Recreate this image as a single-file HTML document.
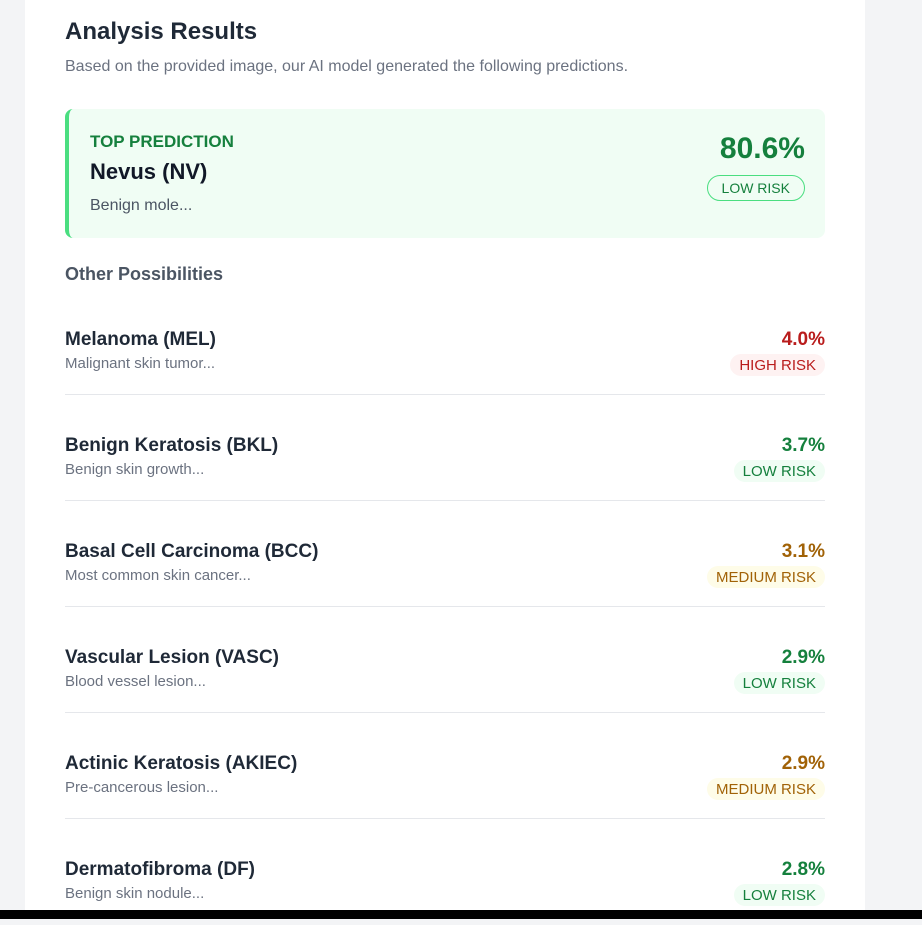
<html><head><style>
body{margin:0;width:922px;height:919px;background:#f3f4f6;font-family:"Liberation Sans",sans-serif;overflow:hidden;position:relative}
.card{position:absolute;left:25px;top:0;width:840px;height:919px;background:#fff}
.abs{position:absolute}
h1{position:absolute;left:65px;top:18px;margin:0;font-size:24px;font-weight:bold;color:#1f2937}
.sub{left:65px;top:58px;font-size:16px;color:#6b7280}
.top{left:65px;top:109px;width:760px;height:129px;background:#f0fdf4;border-left:4px solid #4ade80;border-radius:8px;box-sizing:border-box}
.row{position:absolute;left:65px;width:760px;height:106px;border-bottom:1px solid #e5e7eb;box-sizing:border-box}
.nm{position:absolute;left:0;top:2px;font-size:19px;font-weight:bold;color:#1f2937}
.ds{position:absolute;left:0;top:28px;font-size:15px;color:#6b7280}
.pc{position:absolute;right:0;top:2px;font-size:19px;font-weight:bold}
.bd{position:absolute;right:0;top:27px;font-size:15px;padding:3px 9px 2px;border-radius:12px}
.g{color:#15803d}.gb{background:#f0fdf4;color:#15803d}
.r{color:#b91c1c}.rb{background:#fef2f2;color:#b91c1c}
.y{color:#a16207}.yb{background:#fefce8;color:#a16207}
</style></head><body>
<div class="card"></div>
<h1>Analysis Results</h1>
<div class="abs sub">Based on the provided image, our AI model generated the following predictions.</div>
<div class="abs top">
<div class="abs" style="left:21px;top:23px;font-size:17px;font-weight:bold;color:#15803d">TOP PREDICTION</div>
<div class="abs" style="left:21px;top:50px;font-size:22px;font-weight:bold;color:#111827">Nevus (NV)</div>
<div class="abs" style="left:21px;top:88px;font-size:16px;color:#4b5563">Benign mole...</div>
<div class="abs" style="right:20px;top:23px;font-size:30px;font-weight:bold;color:#15803d">80.6%</div>
<div class="abs" style="right:20px;top:66px;font-size:14px;color:#15803d;border:1px solid #4ade80;border-radius:13px;padding:4px 14px;background:#f0fdf4">LOW RISK</div>
</div>
<div class="abs" style="left:65px;top:264px;font-size:18px;font-weight:bold;color:#4b5563">Other Possibilities</div>
<div class="row" style="top:327px;height:68px"><div class="nm">Melanoma (MEL)</div><div class="ds">Malignant skin tumor...</div><div class="pc r">4.0%</div><div class="bd rb">HIGH RISK</div></div>
<div class="row" style="top:433px;height:68px"><div class="nm">Benign Keratosis (BKL)</div><div class="ds">Benign skin growth...</div><div class="pc g">3.7%</div><div class="bd gb">LOW RISK</div></div>
<div class="row" style="top:539px;height:68px"><div class="nm">Basal Cell Carcinoma (BCC)</div><div class="ds">Most common skin cancer...</div><div class="pc y">3.1%</div><div class="bd yb">MEDIUM RISK</div></div>
<div class="row" style="top:645px;height:68px"><div class="nm">Vascular Lesion (VASC)</div><div class="ds">Blood vessel lesion...</div><div class="pc g">2.9%</div><div class="bd gb">LOW RISK</div></div>
<div class="row" style="top:751px;height:68px"><div class="nm">Actinic Keratosis (AKIEC)</div><div class="ds">Pre-cancerous lesion...</div><div class="pc y">2.9%</div><div class="bd yb">MEDIUM RISK</div></div>
<div class="row" style="top:857px;height:68px;border:none"><div class="nm">Dermatofibroma (DF)</div><div class="ds">Benign skin nodule...</div><div class="pc g">2.8%</div><div class="bd gb">LOW RISK</div></div>
<div class="abs" style="left:0;top:910px;width:922px;height:9px;background:#000"></div>
</body></html>
